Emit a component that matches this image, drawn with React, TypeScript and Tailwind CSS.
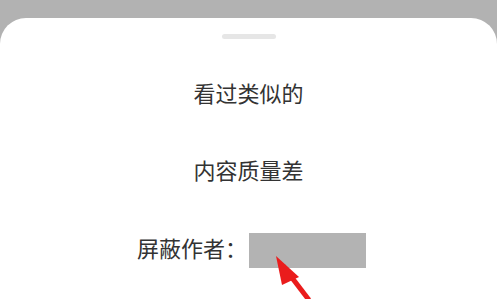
export default function App() {
  return (
    <div className="h-[299px] w-full overflow-hidden bg-[#b2b2b2] pt-[18px] font-['Noto_Sans_CJK_SC',sans-serif]">
      <div className="relative flex h-full flex-col items-center rounded-t-[26px] bg-white">
        <div className="mt-4 h-[5px] w-[54px] rounded-full bg-[#e6e6e6]" />
        <p className="mt-[38px] text-[22px] leading-[30px] text-[#333]">看过类似的</p>
        <p className="mt-[47px] text-[22px] leading-[30px] text-[#333]">内容质量差</p>
        <div className="mt-[48px] flex items-center pl-[6px]">
          <span className="mb-[6px] text-[22px] leading-[30px] text-[#333]">屏蔽作者：</span>
          <div className="ml-[2px] h-[35px] w-[117px] bg-[#b3b3b3]" />
        </div>
        <svg
          className="absolute left-0 top-0"
          width="497"
          height="281"
          viewBox="0 18 497 281"
        >
          <line x1="309" y1="300" x2="283" y2="266" stroke="#ea1c1c" strokeWidth="5" />
          <polygon points="276,256 299,277 282,285" fill="#ea1c1c" />
        </svg>
      </div>
    </div>
  );
}
